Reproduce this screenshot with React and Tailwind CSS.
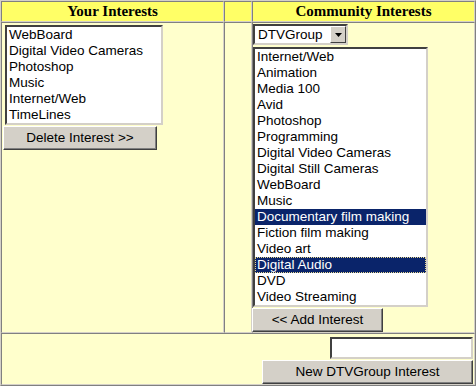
import React from 'react';

const yourInterests = ['WebBoard', 'Digital Video Cameras', 'Photoshop', 'Music', 'Internet/Web', 'TimeLines'];

const communityInterests = [
  'Internet/Web',
  'Animation',
  'Media 100',
  'Avid',
  'Photoshop',
  'Programming',
  'Digital Video Cameras',
  'Digital Still Cameras',
  'WebBoard',
  'Music',
  'Documentary film making',
  'Fiction film making',
  'Video art',
  'Digital Audio',
  'DVD',
  'Video Streaming',
];

const selected = ['Documentary film making', 'Digital Audio'];

const cell = 'box-border border border-t-[#808080] border-l-[#808080] border-r-[#d4d0c8] border-b-[#d4d0c8]';
const inset = 'box-border border-2 border-t-[#404040] border-l-[#404040] border-r-[#d4d0c8] border-b-[#d4d0c8] bg-white';
const button =
  'box-border border border-t-white border-l-white border-r-[#404040] border-b-[#404040] shadow-[inset_-1px_-1px_0_#808080] bg-[#d4d0c8] text-[13.5px] text-black flex items-center justify-center';

const ListBox = ({ items, className }) => (
  <div className={`${inset} ${className} overflow-hidden`}>
    {items.map((item) => {
      const isSel = selected.includes(item);
      const isFocus = item === 'Digital Audio';
      return (
        <div
          key={item}
          className={`h-4 leading-4 pl-[2px] whitespace-nowrap text-[13.5px] ${
            isSel ? 'bg-[#0a246a] text-white' : 'text-black'
          } ${isFocus ? 'outline-1 outline-dotted outline-[#e8d890] -outline-offset-1' : ''}`}
        >
          {item}
        </div>
      );
    })}
  </div>
);

export default function App() {
  return (
    <div className="w-[476px] h-[387px] bg-white" style={{ fontFamily: '"Liberation Sans", Arial, sans-serif' }}>
      <div className="box-border w-[476px] border border-t-[#d4d0c8] border-l-[#d4d0c8] border-r-[#808080] border-b-[#808080] grid grid-cols-[223px_28px_223px] grid-rows-[21px_311px_52px]">
        {/* Header */}
        <div
          className={`${cell} bg-[#ffff66] flex items-center justify-center font-bold text-[15px] text-black`}
          style={{ fontFamily: '"Liberation Serif", "Times New Roman", serif' }}
        >
          Your Interests
        </div>
        <div className={`${cell} bg-[#ffff66]`} />
        <div
          className={`${cell} bg-[#ffff66] flex items-center justify-center font-bold text-[15px] text-black`}
          style={{ fontFamily: '"Liberation Serif", "Times New Roman", serif' }}
        >
          Community Interests
        </div>

        {/* Your interests */}
        <div className={`${cell} bg-[#ffffcc] flex flex-col items-start`}>
          <ListBox items={yourInterests} className="ml-[3px] mt-[2px] w-[158px] h-[100px]" />
          <div className={`${button} ml-[1px] mt-[1px] w-[154px] h-6`}>Delete Interest &gt;&gt;</div>
        </div>

        <div className={`${cell} bg-[#ffffcc]`} />

        {/* Community interests */}
        <div className={`${cell} bg-[#ffffcc] flex flex-col items-start`}>
          <div className={`${inset} mt-[1px] w-[95px] h-[21px] flex items-center justify-between pr-[0px]`}>
            <span className="pl-[3px] text-[13.5px] text-black leading-4">DTVGroup</span>
            <div className={`${button} w-4 h-[17px] shadow-none`}>
              <svg width="7" height="4" viewBox="0 0 7 4">
                <path d="M0 0h7L3.5 4z" fill="#000" />
              </svg>
            </div>
          </div>
          <ListBox items={communityInterests} className="mt-[2px] w-[175px] h-[260px]" />
          <div className={`${button} -ml-[1px] mt-[1px] w-[131px] h-6`}>&lt;&lt; Add Interest</div>
        </div>

        {/* New interest */}
        <div className={`${cell} col-span-3 bg-[#ffffcc] flex flex-col items-end pr-[1px]`}>
          <div className={`${inset} mt-[3px] w-[143px] h-[22px]`} />
          <div className={`${button} mt-[1px] w-[211px] h-6`}>New DTVGroup Interest</div>
        </div>
      </div>
    </div>
  );
}
